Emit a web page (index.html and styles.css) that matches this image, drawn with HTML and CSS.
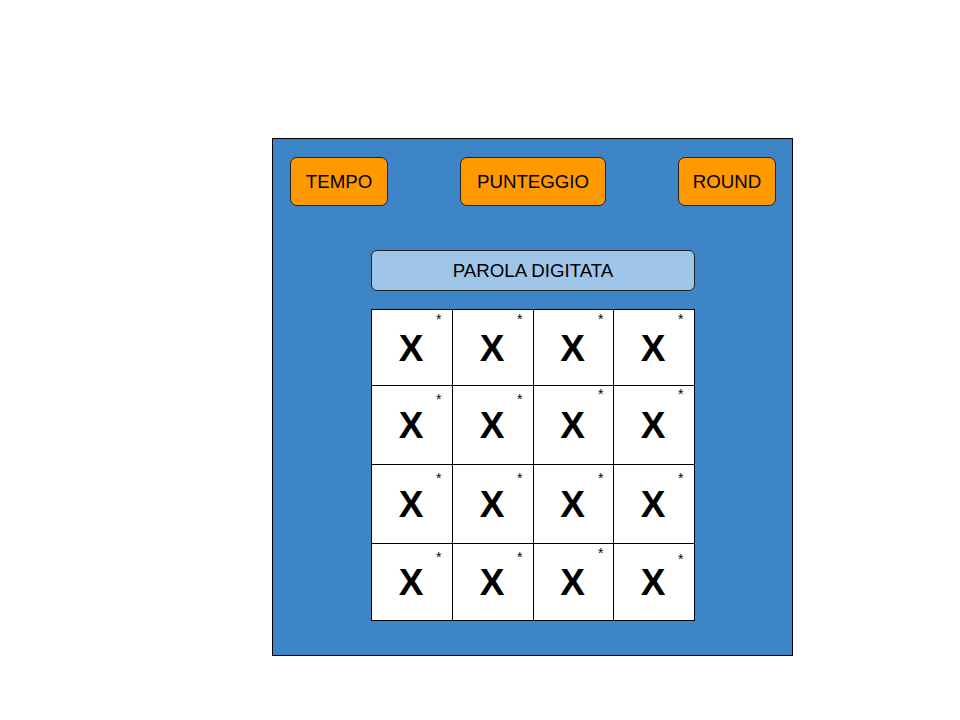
FILE: index.html
```html
<!DOCTYPE html>
<html lang="it">
<head>
    <meta charset="UTF-8" />
    <title>Gioco Parole</title>
    <link rel="stylesheet" href="styles.css">
</head>
<body>
<div class="board">
    <div class="top-bar">
        <div class="pill pill-small">TEMPO</div>
        <div class="pill pill-wide">PUNTEGGIO</div>
        <div class="pill pill-small">ROUND</div>
    </div>

    <div class="play-area">
        <div class="word-bar">PAROLA DIGITATA</div>

        <div class="letter-grid">
            <div class="cell"><span class="letter">X</span><span class="mark m-top">*</span></div>
            <div class="cell"><span class="letter">X</span><span class="mark m-top">*</span></div>
            <div class="cell"><span class="letter">X</span><span class="mark m-top">*</span></div>
            <div class="cell"><span class="letter">X</span><span class="mark m-top">*</span></div>

            <div class="cell"><span class="letter">X</span><span class="mark">*</span></div>
            <div class="cell"><span class="letter">X</span><span class="mark">*</span></div>
            <div class="cell"><span class="letter">X</span><span class="mark m-high">*</span></div>
            <div class="cell"><span class="letter">X</span><span class="mark m-high">*</span></div>

            <div class="cell"><span class="letter">X</span><span class="mark">*</span></div>
            <div class="cell"><span class="letter">X</span><span class="mark">*</span></div>
            <div class="cell"><span class="letter">X</span><span class="mark">*</span></div>
            <div class="cell"><span class="letter">X</span><span class="mark">*</span></div>

            <div class="cell"><span class="letter">X</span><span class="mark">*</span></div>
            <div class="cell"><span class="letter">X</span><span class="mark">*</span></div>
            <div class="cell"><span class="letter">X</span><span class="mark m-top">*</span></div>
            <div class="cell"><span class="letter">X</span><span class="mark m-low">*</span></div>
        </div>
    </div>
</div>
</body>
</html>
```

FILE: styles.css
```css
* {
    box-sizing: border-box;
    margin: 0;
    padding: 0;
    font-family: 'Liberation Sans', Arial, sans-serif;
}

body {
    background-color: #ffffff;
    padding: 138px 0 0 272px;
}

.board {
    width: 521px;
    height: 518px;
    background-color: #3d85c6;
    border: 1px solid #000;
    padding: 18px 16px 0 17px;
}

.top-bar {
    display: flex;
    justify-content: space-between;
}

.pill {
    height: 49px;
    display: flex;
    align-items: center;
    justify-content: center;
    padding-top: 1px;
    background-color: #ff9900;
    border: 1px solid #222;
    border-radius: 7px;
    font-size: 18.7px;
    color: #000;
}

.pill-small {
    width: 98px;
}

.pill-wide {
    width: 146px;
}

.play-area {
    width: 324px;
    margin: 44px auto 0;
    display: flex;
    flex-direction: column;
    gap: 18px;
}

.word-bar {
    height: 41px;
    display: flex;
    align-items: center;
    justify-content: center;
    background-color: #9fc5e8;
    border: 1px solid #222;
    border-radius: 6px;
    font-size: 18.7px;
    color: #000;
}

.letter-grid {
    display: grid;
    grid-template-columns: 80px 80px 79px 80px;
    grid-template-rows: 75px 78px 78px 76px;
    gap: 1px;
    background-color: #000;
    border: 1px solid #000;
}

.cell {
    position: relative;
    background-color: #fff;
    display: flex;
    align-items: center;
    justify-content: center;
    padding: 1px 2px 0 0;
}

.letter {
    font-size: 37px;
    font-weight: bold;
    line-height: 1;
    color: #000;
}

.mark {
    position: absolute;
    left: 64px;
    top: 6px;
    font-size: 14px;
    line-height: 14px;
    color: #000;
}

.mark.m-top {
    top: 2px;
}

.mark.m-high {
    top: 1px;
}

.mark.m-low {
    top: 8px;
}
```
